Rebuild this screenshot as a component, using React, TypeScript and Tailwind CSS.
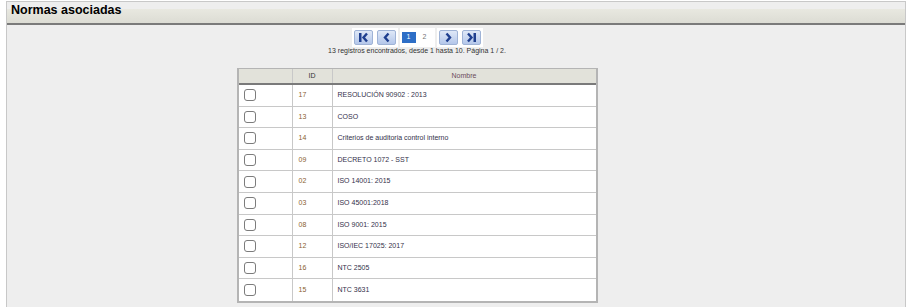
const rows = [
  { id: "17", name: "RESOLUCIÓN 90902 : 2013" },
  { id: "13", name: "COSO" },
  { id: "14", name: "Criterios de auditoria control interno" },
  { id: "09", name: "DECRETO 1072 - SST" },
  { id: "02", name: "ISO 14001: 2015" },
  { id: "03", name: "ISO 45001:2018" },
  { id: "08", name: "ISO 9001: 2015" },
  { id: "12", name: "ISO/IEC 17025: 2017" },
  { id: "16", name: "NTC 2505" },
  { id: "15", name: "NTC 3631" },
];

function PageButton({ kind }: { kind: "first" | "prev" | "next" | "last" }) {
  return (
    <div className="bg-white p-[2px]">
      <div className="flex h-[15px] w-[19px] items-center justify-center rounded-[2px] border border-[#9fb3d6] bg-[linear-gradient(to_bottom,#dfe8f7,#b4c7ea)]">
        <svg width="13" height="11" viewBox="0 0 13 11">
          {kind === "first" && (
            <>
              <rect x="2" y="1" width="2.5" height="9" fill="#1f3f8f" />
              <path d="M10 1.5 L6.5 5.5 L10 9.5" stroke="#1f3f8f" strokeWidth="2.4" fill="none" />
            </>
          )}
          {kind === "prev" && (
            <path d="M8.5 1.5 L5 5.5 L8.5 9.5" stroke="#1f3f8f" strokeWidth="2.4" fill="none" />
          )}
          {kind === "next" && (
            <path d="M4.5 1.5 L8 5.5 L4.5 9.5" stroke="#1f3f8f" strokeWidth="2.4" fill="none" />
          )}
          {kind === "last" && (
            <>
              <path d="M3 1.5 L6.5 5.5 L3 9.5" stroke="#1f3f8f" strokeWidth="2.4" fill="none" />
              <rect x="8.5" y="1" width="2.5" height="9" fill="#1f3f8f" />
            </>
          )}
        </svg>
      </div>
    </div>
  );
}

export default function App() {
  return (
    <div className="h-[307px] w-[914px] overflow-hidden bg-white pl-[6px] pt-[1px] font-['Liberation_Sans',Arial,sans-serif]">
      <div className="h-[310px] w-[900px] border border-b-0 border-[#c8c8c8] bg-[#eeeeee]">
        <div className="h-[23px] border-b-2 border-[#7a7a7a] bg-[linear-gradient(to_bottom,#eeeeee_0,#eeeeee_7px,#e8e8e0_7px,#dcdcd4_100%)] pl-[4px]">
          <h1 className="text-[12.5px] font-bold leading-[17px] text-black">Normas asociadas</h1>
        </div>

        <div className="flex w-[820px] flex-col items-center">
          <div className="mt-[3px] flex items-center">
            <PageButton kind="first" />
            <PageButton kind="prev" />
            <div className="mx-[2px] flex h-[19px] w-[35px] items-center bg-white pl-[2px]">
              <span className="flex h-[11px] w-[14px] items-center justify-center bg-[#2d6ec6] text-[7px] text-white">1</span>
              <span className="ml-[7px] text-[7px] text-[#777]">2</span>
            </div>
            <PageButton kind="next" />
            <PageButton kind="last" />
          </div>
          <p className="text-[7px] leading-[8px] text-[#333]">
            13 registros encontrados, desde 1 hasta 10. Página 1 / 2.
          </p>

          <div className="mt-[13px] w-[361px] border-2 border-t border-[#b4b4b4] bg-white text-[7px]">
            <div className="grid h-[16px] grid-cols-[54px_40px_1fr] border-b-2 border-[#7a7a7a] bg-[#e2e2da] leading-[14px]">
              <div className="border-r border-[#c8c8c8]" />
              <div className="border-r border-[#c8c8c8] text-center text-[#333]">ID</div>
              <div className="text-center text-[#6b4b5b]">Nombre</div>
            </div>
            {rows.map((r) => (
              <div
                key={r.id}
                className="grid h-[21.6px] grid-cols-[54px_40px_1fr] border-b border-[#c8c8c8] last:border-b-0"
              >
                <div className="flex items-center border-r border-[#c8c8c8] pl-[5px]">
                  <span className="block h-[12px] w-[12px] rounded-[3px] border-[1.5px] border-[#7c7c7c] bg-white" />
                </div>
                <div className="flex items-center border-r border-[#c8c8c8] pl-[6px] text-[#8a6230]">{r.id}</div>
                <div className="flex items-center pl-[5px] text-[#34304a]">{r.name}</div>
              </div>
            ))}
          </div>
        </div>
      </div>
    </div>
  );
}
